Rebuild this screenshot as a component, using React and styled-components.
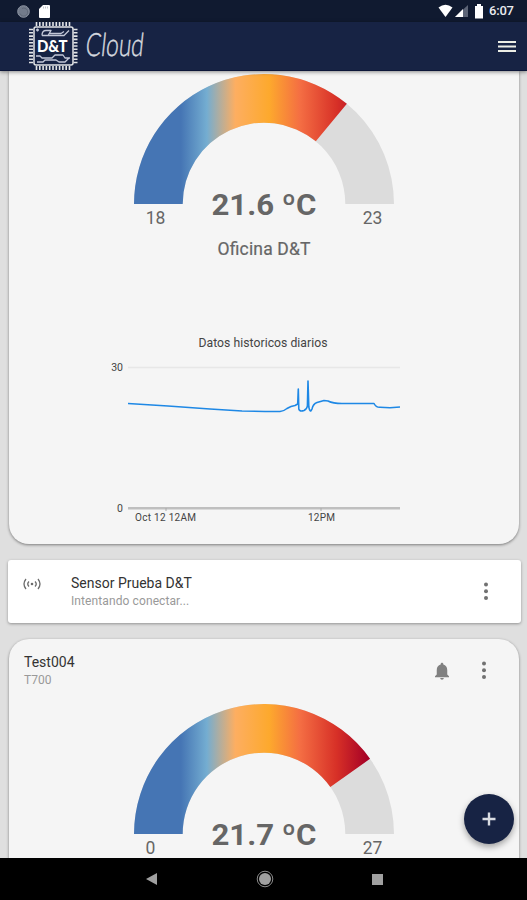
import React from 'react';
import styled, { createGlobalStyle } from 'styled-components';

const GlobalStyle = createGlobalStyle`
    * {
        box-sizing: border-box;
    }
    body {
        margin: 0;
        background-color: #dfdfdf;
        font-family: Roboto, "Liberation Sans", sans-serif;
    }
    svg {
        display: block;
    }
`;

const Screen = styled.div`
    display: flex;
    flex-direction: column;
    width: 527px;
    height: 900px;
    overflow: hidden;
    position: relative;
    background-color: #dfdfdf;
`;

const StatusBar = styled.div`
    display: flex;
    flex: none;
    align-items: center;
    justify-content: space-between;
    height: 22px;
    padding: 0 12px 0 17px;
    background-color: #101a30;
`;

const StatusGroup = styled.div`
    display: flex;
    align-items: center;
    gap: ${(props) => props.$gap}px;
`;

const Clock = styled.span`
    width: 26px;
    font-size: 13px;
    font-weight: 500;
    line-height: 22px;
    letter-spacing: -0.2px;
    color: #e9ebef;
`;

const AppBar = styled.header`
    display: flex;
    flex: none;
    align-items: center;
    justify-content: space-between;
    height: 49px;
    padding: 0 11px 0 28px;
    background-color: #172344;
    border-bottom: 1px solid #0c1638;
    box-shadow: 0 1px 4px rgba(0, 0, 0, 0.45);
    z-index: 1;
`;

const MenuButton = styled.button`
    padding: 0;
    border: 0;
    background: none;
    color: #eceee6;
`;

const Content = styled.main`
    display: flex;
    flex: 1;
    flex-direction: column;
    min-height: 0;
    overflow: hidden;
    padding: 0 8px;
`;

const Card = styled.section`
    flex: none;
    margin: 0 0 0 1px;
    width: 510px;
    height: ${(props) => props.$height}px;
    border-radius: ${(props) => props.$radius};
    background-color: #f5f5f5;
    box-shadow: 0 1px 3px rgba(0, 0, 0, 0.45);
`;

const SensorRow = styled.section`
    display: flex;
    flex: none;
    align-items: center;
    width: 513px;
    height: 63px;
    margin: 16px 0;
    padding: 0 32px 0 15px;
    border-radius: 3px;
    background-color: #fff;
    box-shadow: 0 1px 3px rgba(0, 0, 0, 0.35);
`;

const SensorIcon = styled.div`
    align-self: flex-start;
    width: 48px;
    padding-top: 17px;
`;

const CardHeader = styled.header`
    display: flex;
    align-items: center;
    height: 62px;
    padding: 2px 32px 0 15px;
`;

const Titles = styled.div`
    flex: 1;
`;

const Title = styled.div`
    font-size: 14px;
    line-height: 19px;
    color: #333;
`;

const Subtitle = styled.div`
    font-size: 12px;
    line-height: 17px;
    letter-spacing: ${(props) => props.$spacing || 0}px;
    color: #999;
`;

const Actions = styled.div`
    display: flex;
    align-items: center;
    gap: 32px;
`;

const GaugeBox = styled.div`
    padding-left: 106px;
`;

const ChartBox = styled.div`
    padding: 64px 0 0 91px;
`;

const AddButton = styled.button`
    position: absolute;
    right: 13px;
    bottom: 56px;
    display: flex;
    align-items: center;
    justify-content: center;
    width: 50px;
    height: 50px;
    padding: 0;
    border: 0;
    border-radius: 50%;
    background-color: #172344;
    box-shadow: 0 3px 6px rgba(0, 0, 0, 0.35);
`;

const NavBar = styled.nav`
    display: flex;
    flex: none;
    align-items: center;
    justify-content: space-between;
    height: 42px;
    padding: 0 144px 0 145px;
    background-color: #000;
`;

const pins = [0, 1, 2, 3, 4, 5, 6, 7, 8, 9, 10];

const Logo = () => (
    <svg width="120" height="49" viewBox="0 0 120 49" overflow="visible">
        <g stroke="#e2e4e5" strokeWidth="1.6">
            {pins.map((i) => (
                <path
                    key={i}
                    d={`M${8.5 + i * 3.3} 0v4M${8.5 + i * 3.3} 44v4M1 ${7.5 + i * 3.3}h4M45.5 ${7.5 + i * 3.3}h4`}
                />
            ))}
        </g>
        <rect x="6" y="5" width="39" height="38" rx="2" fill="none" stroke="#e2e4e5" strokeWidth="1.5" />
        <g fill="none" stroke="#c3c8d8" strokeWidth="1.3" strokeLinejoin="round">
            <path d="M8 8h3M9.5 6.500v3" />
            <path d="M14 13.500q0-5 4-5h5l-3 5h16l5-5M21 11.500h12l3-2M14 13.500h8" />
            <path d="M8 34h4l2 2h10l3-3h8l2 3h5M9 40h6l2-2h11l3 2h6l4-4" />
        </g>
        <text
            x="9"
            y="30"
            textLength="30.500"
            lengthAdjust="spacingAndGlyphs"
            fontFamily="Lato, sans-serif"
            fontSize="17.500"
            fontWeight="900"
            fill="#fff"
        >
            D&amp;T
        </text>
        <text
            x="57"
            y="34.500"
            textLength="58"
            lengthAdjust="spacingAndGlyphs"
            fontFamily="Lato, sans-serif"
            fontSize="32"
            fontWeight="300"
            fill="#d5d8df"
            stroke="#d5d8df"
            strokeWidth="0.5"
            transform="translate(3.500 0) skewX(-6)"
        >
            Cloud
        </text>
    </svg>
);

const MoreIcon = () => (
    <svg width="6" height="20" viewBox="0 0 6 20" fill="#717171">
        <circle cx="3" cy="2.500" r="2" />
        <circle cx="3" cy="9.300" r="2" />
        <circle cx="3" cy="16.100" r="2" />
    </svg>
);

const BellIcon = () => (
    <svg width="14" height="18" viewBox="4 2 16 20" fill="#808080">
        <path d="M12 22c1.100 0 2-.9 2-2h-4c0 1.100.9 2 2 2zm6-6v-5c0-3.070-1.640-5.640-4.500-6.320V4c0-.83-.67-1.500-1.500-1.500s-1.500.67-1.500 1.500v.68C7.630 5.360 6 7.920 6 11v5l-2 2v1h16v-1l-2-2z" />
    </svg>
);

const AntennaIcon = () => (
    <svg width="18" height="14" viewBox="0 0 18 14" fill="none" stroke="#6c6c6c" strokeWidth="1.3">
        <path d="M3 2Q-1 7 3 12M15 2q4 5 0 10M6 4.500Q3.500 7 6 9.500M12 4.500q2.500 2.500 0 5" />
        <circle cx="9" cy="7" r="1.3" fill="#6c6c6c" stroke="none" />
    </svg>
);

const CX = 149;
const CY = 133;
const OUTER = 130;
const INNER = 81.3;

// ring segment between two fractions of the half circle
const ringPath = (from, to) => {
    const point = (r, f) => {
        const a = Math.PI * (1 - f);
        return `${CX + r * Math.cos(a)} ${CY - r * Math.sin(a)}`;
    };
    return `M${point(OUTER, from)}A${OUTER} ${OUTER} 0 0 1 ${point(OUTER, to)}L${point(INNER, to)}A${INNER} ${INNER} 0 0 0 ${point(INNER, from)}Z`;
};

const Gauge = ({ id, value, min, max, minX, label }) => {
    const fraction = (value - min) / (max - min);

    return (
        <svg width="298" height="200" viewBox="0 0 298 200" fontFamily="Roboto, sans-serif" fill="#666">
            <defs>
                <linearGradient id={id} gradientUnits="userSpaceOnUse" x1="19" y1="0" x2="279" y2="0">
                    <stop offset="0" stopColor="#4575b4" />
                    <stop offset="0.18" stopColor="#4575b4" />
                    <stop offset="0.28" stopColor="#74add1" />
                    <stop offset="0.39" stopColor="#fdae61" />
                    <stop offset="0.52" stopColor="#fda92d" />
                    <stop offset="0.64" stopColor="#f46d43" />
                    <stop offset="0.78" stopColor="#d73027" />
                    <stop offset="0.9" stopColor="#a50026" />
                </linearGradient>
            </defs>
            <path d={ringPath(0, 1)} fill="#dcdcdc" />
            <path d={ringPath(0, fraction)} fill={`url(#${id})`} />
            <text x="96.5" y="143.5" textLength="105" lengthAdjust="spacingAndGlyphs" fontSize="30" fontWeight="700">
                {value} ºC
            </text>
            <text x={minX} y="153" textAnchor="middle" fontSize="17.5">{min}</text>
            <text x="257.5" y="153" textAnchor="middle" fontSize="17.5">{max}</text>
            {label && (
                <text x="102.5" y="184" textLength="93" fontSize="17.5" stroke="#666" strokeWidth="0.2">{label}</text>
            )}
        </svg>
    );
};

const history =
    'M28 68.5L68 71L110 74L142 76L165 76.5L180 76.5Q184 76 187 73.5Q191 71 195 70.5L197.7 69L198.3 54L198.8 74Q199.5 77 204 75.5Q207 74 207.4 71L208 46L208.8 72Q210 78.5 212 74Q213 69 217 67.5L224 65.5L228 66Q233 68.5 242 68.5H274Q276 72.5 280 72.3L290 72.8L300 72';

const HistoryChart = () => (
    <svg width="310" height="190" viewBox="0 0 310 190" fontFamily="Roboto, sans-serif" fill="#444">
        <text x="98.5" y="12" textLength="129" fontSize="12.2">Datos historicos diarios</text>
        <text x="23" y="36" textAnchor="end" fontSize="10.5">30</text>
        <text x="23" y="177" textAnchor="end" fontSize="10.5">0</text>
        <path d="M28 32.5h272" stroke="#e7e7e7" strokeWidth="1.5" />
        <path d="M28 173.300h272" stroke="#bfbfbf" strokeWidth="2.4" />
        <path d="M66 173v3M221 173v3" stroke="#aaa" />
        <path d={history} fill="none" stroke="#1e88e5" strokeWidth="1.6" strokeLinejoin="round" />
        <text x="35" y="185.5" textLength="61" fontSize="10">Oct 12 12AM</text>
        <text x="208" y="185.5" textLength="27" fontSize="10">12PM</text>
    </svg>
);

const App = () => {
    return (
        <Screen>
            <GlobalStyle />
            <StatusBar>
                <StatusGroup $gap={9}>
                    <svg width="13" height="13" viewBox="0 0 13 13">
                        <circle cx="6.5" cy="6.5" r="5.8" fill="#727b8b" stroke="#8d95a3" />
                        <path d="M5 3.5a4 4 0 1 1-2 5" fill="none" stroke="#5f6878" />
                    </svg>
                    <svg width="11" height="13" viewBox="0 0 11 13">
                        <path d="M4 0h6q1 0 1 1v11q0 1-1 1H1q-1 0-1-1V4z" fill="#fff" />
                        <path d="M4.5 1.5v2M6.5 1.5v2M8.500 1.5v2" stroke="#c3c7ce" />
                    </svg>
                </StatusGroup>
                <StatusGroup $gap={6}>
                    <svg width="31" height="14" viewBox="0 0 31 14">
                        <path d="M0.5 3.5Q7.500 -2 14.5 3.5L7.5 13z" fill="#fff" />
                        <path d="M30 1v12H17z" fill="#5c6476" />
                        <path d="M25 5v8H17z" fill="#fff" />
                    </svg>
                    <svg width="8" height="15" viewBox="0 0 8 15">
                        <path d="M2 0h4v2h2v12.500H0V2h2z" fill="#fff" />
                    </svg>
                    <Clock>6:07</Clock>
                </StatusGroup>
            </StatusBar>
            <AppBar>
                <Logo />
                <MenuButton>
                    <svg width="18" height="14" viewBox="0 0 18 14" stroke="currentColor" strokeWidth="2">
                        <path d="M0 3h18M0 7.5h18M0 12h18" />
                    </svg>
                </MenuButton>
            </AppBar>
            <Content>
                <Card $height={473} $radius="0 0 20px 20px">
                    <GaugeBox>
                        <Gauge id="office" value={21.6} min={18} max={23} minX={40.5} label="Oficina D&T" />
                    </GaugeBox>
                    <ChartBox>
                        <HistoryChart />
                    </ChartBox>
                </Card>
                <SensorRow>
                    <SensorIcon>
                        <AntennaIcon />
                    </SensorIcon>
                    <Titles>
                        <Title>Sensor Prueba D&amp;T</Title>
                        <Subtitle $spacing={0.1}>Intentando conectar...</Subtitle>
                    </Titles>
                    <Actions>
                        <MoreIcon />
                    </Actions>
                </SensorRow>
                <Card $height={300} $radius="20px 20px 0 0">
                    <CardHeader>
                        <Titles>
                            <Title>Test004</Title>
                            <Subtitle>T700</Subtitle>
                        </Titles>
                        <Actions>
                            <BellIcon />
                            <MoreIcon />
                        </Actions>
                    </CardHeader>
                    <GaugeBox>
                        <Gauge id="test" value={21.7} min={0} max={27} minX={35.5} />
                    </GaugeBox>
                </Card>
            </Content>
            <AddButton>
                <svg width="14" height="14" viewBox="0 0 14 14" stroke="#d9dce2" strokeWidth="2.4">
                    <path d="M7 0.5v13M0.5 7h13" />
                </svg>
            </AddButton>
            <NavBar>
                <svg width="12" height="12" viewBox="0 0 12 12">
                    <path d="M12 0v12L1 6z" fill="#a0a0a0" />
                </svg>
                <svg width="18" height="18" viewBox="0 0 18 18">
                    <circle cx="9" cy="9" r="6" fill="#a0a0a0" />
                    <circle cx="9" cy="9" r="7.8" fill="none" stroke="#8a8a8a" />
                </svg>
                <svg width="11" height="11" viewBox="0 0 11 11">
                    <rect width="11" height="11" fill="#a0a0a0" />
                </svg>
            </NavBar>
        </Screen>
    );
};

export default App;
